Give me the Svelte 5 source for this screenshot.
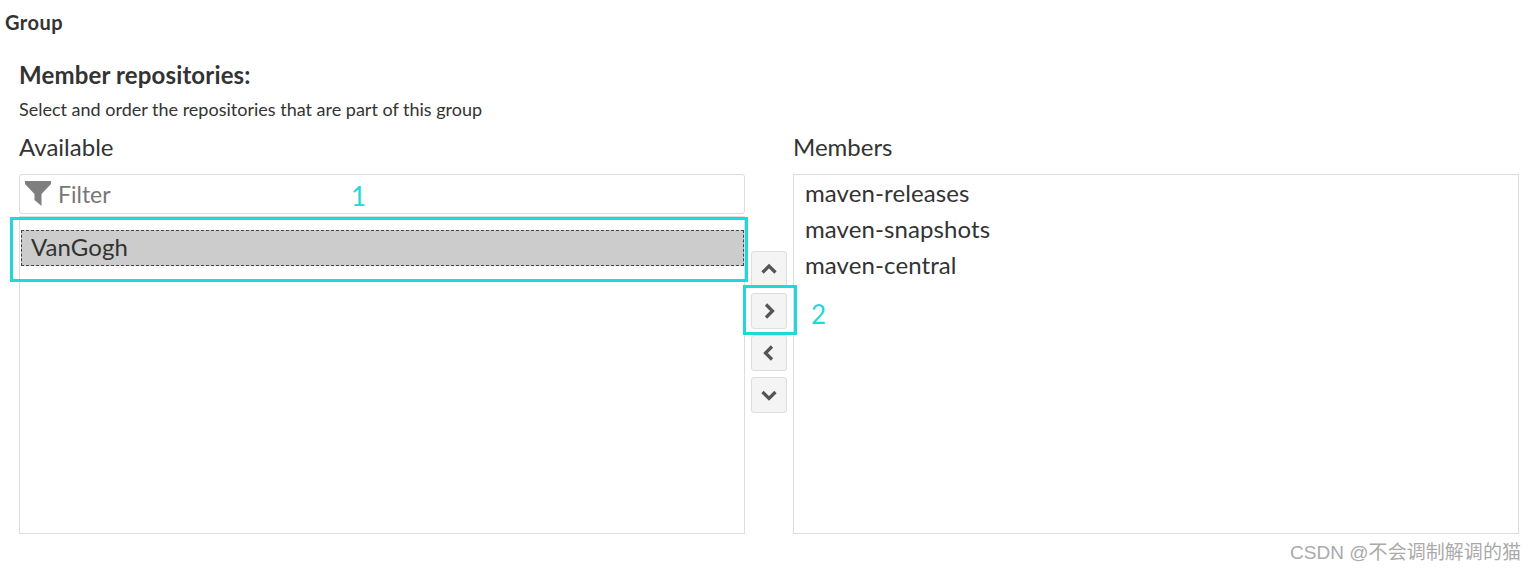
<script>
  const members = ["maven-releases", "maven-snapshots", "maven-central"];
  const arrows = [
    { name: "up", d: "M1.5 11.5 L8 5 L14.5 11.5" },
    { name: "add", d: "M5 1.5 L11.5 8 L5 14.5" },
    { name: "remove", d: "M11 1.5 L4.5 8 L11 14.5" },
    { name: "down", d: "M1.5 5 L8 11.5 L14.5 5" },
  ];
</script>

<div class="page">
  <h2 class="group">Group</h2>
  <section class="field">
    <h3>Member repositories:</h3>
    <p class="hint">Select and order the repositories that are part of this group</p>
    <div class="transfer">
      <div class="column">
        <div class="label">Available</div>
        <div class="filter">
          <svg class="funnel" width="26" height="26" viewBox="0 0 26 26">
            <path d="M0 1 H26 V4 L16.5 14 V26 L9.5 20 V14 L0 4 Z" fill="#7f7f7f" />
          </svg>
          <span>Filter</span>
        </div>
        <div class="list available">
          <div class="selected">VanGogh</div>
        </div>
      </div>
      <div class="buttons">
        {#each arrows as arrow}
          <button aria-label={arrow.name}>
            <svg width="16" height="16" viewBox="0 0 16 16">
              <path d={arrow.d} fill="none" stroke="#555" stroke-width="3.2" />
            </svg>
          </button>
        {/each}
      </div>
      <div class="column">
        <div class="label">Members</div>
        <div class="list members">
          {#each members as member}
            <div class="item">{member}</div>
          {/each}
        </div>
      </div>
    </div>
  </section>

  <div class="mark box-one"></div>
  <div class="mark box-two"></div>
  <span class="num num-one">1</span>
  <span class="num num-two">2</span>
  <span class="watermark">CSDN @不会调制解调的猫</span>
</div>

<style>
  :global(body) {
    margin: 0;
    background: #fff;
  }

  .page {
    position: relative;
    height: 571px;
    overflow: hidden;
    font-family: Lato, "Open Sans", sans-serif;
    color: #333;
  }

  .group {
    margin: 0;
    padding: 12px 0 0 5px;
    font-size: 20px;
    line-height: 21px;
    font-weight: 700;
    letter-spacing: 0.5px;
  }

  .field {
    padding: 29px 17px 0 19px;
  }

  h3 {
    margin: 0;
    font-size: 24px;
    line-height: 26px;
    font-weight: 700;
    letter-spacing: 0.15px;
  }

  .hint {
    margin: 11px 0 0;
    font-size: 18px;
    line-height: 20px;
  }

  .transfer {
    display: flex;
    margin-top: 15px;
  }

  .column {
    flex: 1;
    min-width: 0;
  }

  .label {
    font-size: 24px;
    line-height: 26px;
    margin-bottom: 14px;
  }

  .filter {
    display: flex;
    align-items: center;
    gap: 7px;
    height: 38px;
    margin-bottom: 2px;
    padding-left: 5px;
    border: 1px solid #ddd;
    border-radius: 3px;
    font-size: 23px;
    color: #777;
  }

  .funnel {
    margin-top: -3px;
  }

  .list {
    border: 1px solid #ddd;
    font-size: 24px;
    letter-spacing: 0.1px;
    box-sizing: border-box;
  }

  .available {
    height: 318px;
    padding: 13px 0 0 1px;
  }

  .members {
    height: 360px;
    padding: 1px 0 0 11px;
  }

  .selected {
    height: 36px;
    box-sizing: border-box;
    line-height: 31px;
    padding-left: 9px;
    background: #ccc;
    border: 1px dashed #444;
  }

  .item {
    height: 36px;
    line-height: 33px;
  }

  .buttons {
    display: flex;
    flex-direction: column;
    gap: 6px;
    width: 48px;
    flex: none;
    align-items: center;
    padding-top: 117px;
  }

  button {
    display: flex;
    align-items: center;
    justify-content: center;
    width: 36px;
    height: 36px;
    padding: 0;
    background: #f4f4f4;
    border: 1px solid #ddd;
    border-radius: 3px;
  }

  .mark {
    position: absolute;
    box-sizing: border-box;
    border: 3px solid #1fd8d8;
  }

  .box-one {
    left: 10px;
    top: 217px;
    width: 738px;
    height: 65px;
  }

  .box-two {
    left: 743px;
    top: 285px;
    width: 54px;
    height: 50px;
  }

  .num {
    position: absolute;
    font-size: 26px;
    line-height: 30px;
    color: #1fd8d8;
  }

  .num-one {
    left: 351px;
    top: 181px;
  }

  .num-two {
    left: 811px;
    top: 299px;
  }

  .watermark {
    position: absolute;
    right: 15px;
    top: 541px;
    font-family: "Liberation Sans", "Noto Sans CJK SC", sans-serif;
    font-size: 19px;
    letter-spacing: 0.05px;
    line-height: 24px;
    color: #aaa;
  }
</style>
